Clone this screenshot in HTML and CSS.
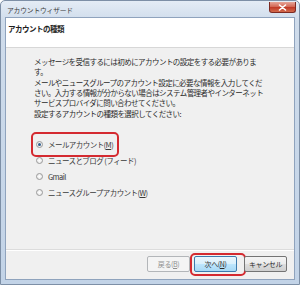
FILE: index.html
```html
<!DOCTYPE html>
<html>
<head>
    <meta charset="UTF-8">
    <title>アカウントウィザード</title>
    <link rel="stylesheet" href="styles.css">
</head>
<body>
    <div class="window">
        <div class="titlebar">
            <span class="title">アカウントウィザード</span>
            <span class="close-btn">
                <svg width="9" height="7" viewBox="0 0 9 7">
                    <path d="M1.5 1 L7.5 6 M7.5 1 L1.5 6" stroke="#ffffff" stroke-width="1.6" stroke-linecap="round"/>
                </svg>
            </span>
        </div>

        <div class="client">
            <div class="header">アカウントの種類</div>

            <div class="content">
                <p>メッセージを受信するには初めにアカウントの設定をする必要がありま<br>す。</p>
                <p>メールやニュースグループのアカウント設定に必要な情報を入力してくだ<br>さい。入力する情報が分からない場合はシステム管理者やインターネット<br>サービスプロバイダに問い合わせてください。</p>
                <p>設定するアカウントの種類を選択してください:</p>

                <div class="options">
                    <label class="option marked"><span class="radio checked"></span><span>メールアカウント(<u>M</u>)</span></label>
                    <label class="option"><span class="radio"></span><span>ニュースとブログ (フィード)</span></label>
                    <label class="option"><span class="radio"></span><span>Gmail</span></label>
                    <label class="option"><span class="radio"></span><span>ニュースグループアカウント(<u>W</u>)</span></label>
                </div>
            </div>

            <div class="footer">
                <span class="btn disabled"><span>戻る(<u>B</u>)</span></span>
                <span class="btn default marked"><span>次へ(<u>N</u>)</span></span>
                <span class="btn cancel"><span>キャンセル</span></span>
            </div>
        </div>
    </div>
</body>
</html>
```

FILE: styles.css
```css
body {
    margin: 0;
    padding: 0;
    background-color: #ffffff;
    font-family: "Noto Sans CJK JP", "Noto Sans", sans-serif;
    color: #2a2a2a;
}

.window {
    width: 300px;
    height: 285px;
    box-sizing: border-box;
    padding: 0 4px 4px 4px;
    border: 1px solid #7d8fa6;
    border-radius: 5px 5px 0 0;
    background: linear-gradient(to bottom, #e4ecf5 0px, #cfdceb 20px, #c2d3e7 100%);
    display: flex;
    flex-direction: column;
}

.titlebar {
    height: 16px;
    display: flex;
    align-items: flex-start;
    justify-content: space-between;
}

.title {
    font-size: 6.8px;
    letter-spacing: -0.2px;
    color: #3b3b3b;
    padding: 4px 0 0 2px;
}

.close-btn {
    width: 25px;
    height: 10px;
    margin-top: 1px;
    margin-right: -1px;
    border: 1px solid #7d2a22;
    border-top: none;
    border-radius: 0 0 3px 3px;
    background: linear-gradient(to bottom, #e6a598 0%, #d46a58 45%, #c13b28 55%, #d26a4c 100%);
    display: flex;
    align-items: center;
    justify-content: center;
}

.client {
    flex: 1;
    border: 1px solid #8fa3bd;
    background-color: #f0f0f0;
    display: flex;
    flex-direction: column;
}

.header {
    height: 30px;
    box-sizing: border-box;
    background-color: #ffffff;
    border-bottom: 1px solid #d7d7d7;
    padding: 5px 0 0 2px;
    font-size: 7.5px;
    font-weight: bold;
    letter-spacing: -0.5px;
    color: #1e1e1e;
}

.content {
    flex: 1;
    padding: 9px 0 0 28px;
    font-size: 7.5px;
    letter-spacing: -0.55px;
}

.content p {
    margin: 0 0 1px 0;
    line-height: 10px;
    white-space: nowrap;
}

.options {
    display: flex;
    flex-direction: column;
    align-items: flex-start;
    margin-top: 17px;
}

.option {
    position: relative;
    height: 16px;
    display: inline-flex;
    align-items: center;
    gap: 5px;
    color: #3a3a3a;
}

.option u,
.btn u {
    text-underline-offset: 1px;
}

.radio {
    width: 5px;
    height: 5px;
    margin-left: 2px;
    border: 1px solid #9a9a9a;
    border-radius: 50%;
    background: radial-gradient(circle, #ffffff 0%, #e2e2e2 100%);
    display: flex;
    align-items: center;
    justify-content: center;
}

.radio.checked::before {
    content: "";
    width: 3px;
    height: 3px;
    border-radius: 50%;
    background-color: #2f5d8c;
}

.option.marked::after {
    content: "";
    position: absolute;
    left: -3px;
    right: -6px;
    top: -4px;
    bottom: -5px;
    border: 2px solid #d42a30;
    border-radius: 5px;
}

.footer {
    height: 30px;
    box-sizing: border-box;
    border-top: 1px solid #dcdcdc;
    box-shadow: inset 0 1px 0 #ffffff;
    display: flex;
    justify-content: flex-end;
    align-items: flex-start;
    gap: 4px;
    padding: 6px 7px 0 0;
}

.btn {
    position: relative;
    width: 43px;
    height: 16px;
    box-sizing: border-box;
    border: 1px solid #747474;
    border-radius: 2px;
    background: linear-gradient(to bottom, #f4f4f4 0%, #ebebeb 50%, #dddddd 51%, #cfcfcf 100%);
    font-size: 7px;
    letter-spacing: -0.4px;
    color: #2a2a2a;
    display: flex;
    align-items: center;
    justify-content: center;
}

.btn.disabled {
    border-color: #b3b6b9;
    background: #f4f4f4;
    color: #8f8f8f;
}

.btn.default {
    border-color: #3d7bad;
    background: linear-gradient(to bottom, #eaf6fd 0%, #d9f0fc 50%, #bee6fd 51%, #a7d9f5 100%);
}

.btn.cancel {
    margin-left: 3px;
}

.btn.marked::after {
    content: "";
    position: absolute;
    left: -5px;
    right: -10px;
    top: -4px;
    bottom: -5px;
    border: 2px solid #d42a30;
    border-radius: 5px;
}
```
